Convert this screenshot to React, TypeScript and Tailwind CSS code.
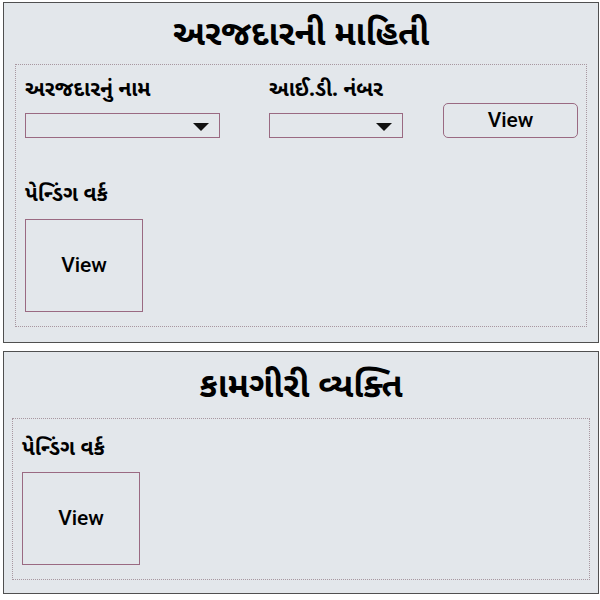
import React from 'react'

const guj = { fontFamily: '"Noto Sans Gujarati", "Lohit Gujarati", "Noto Sans", "DejaVu Sans", sans-serif' }

function Caret() {
  return (
    <svg width="16" height="8" viewBox="0 0 16 8" className="shrink-0">
      <polygon points="0,0 16,0 8,8" fill="#111" />
    </svg>
  )
}

function Select({ width }: { width: string }) {
  return (
    <div className={`${width} h-[25px] border border-[#9a6a82] flex items-center justify-end pr-[10px] pt-[2px]`}>
      <Caret />
    </div>
  )
}

function PendingView() {
  return (
    <div className="w-[118px] h-[93px] border border-[#9a6a82] flex items-center justify-center text-[21px] font-medium text-black font-['Roboto',Arial,sans-serif]">
      View
    </div>
  )
}

export default function App() {
  return (
    <div className="w-[600px] h-[600px] bg-white pt-[2px] pl-[3px]">
      {/* Applicant info */}
      <section className="w-[596px] h-[341px] border border-[#505050] bg-[#e3e7eb] px-[11px] flex flex-col">
        <h1 style={guj} className="h-[61px] pt-[8px] flex items-center justify-center text-[34px] font-bold text-black">
          અરજદારની માહિતી
        </h1>
        <div className="h-[263px] border border-dotted border-[#a897a0] pl-[9px] pt-[12px]">
          <div className="flex items-end">
            <div className="w-[244px]">
              <div style={guj} className="text-[21px] font-bold text-black leading-[28px] mb-[8px]">અરજદારનું નામ</div>
              <Select width="w-[195px]" />
            </div>
            <div className="w-[174px]">
              <div style={guj} className="text-[21px] font-bold text-black leading-[28px] mb-[8px]">આઈ.ડી. નંબર</div>
              <Select width="w-[134px]" />
            </div>
            <button className="w-[135px] h-[35px] border border-[#9a6a82] rounded-[5px] text-[21px] font-medium text-black font-['Roboto',Arial,sans-serif]">
              View
            </button>
          </div>
          <div style={guj} className="mt-[44px] text-[21px] font-bold text-black leading-[28px] mb-[9px]">પેન્ડિંગ વર્ક</div>
          <PendingView />
        </div>
      </section>

      {/* Worker */}
      <section className="mt-[8px] w-[596px] h-[243px] border border-[#505050] bg-[#e3e7eb] px-[8px] flex flex-col">
        <h2 style={guj} className="h-[66px] pt-[8px] flex items-center justify-center text-[34px] font-bold text-black">
          કામગીરી વ્યક્તિ
        </h2>
        <div className="h-[162px] border border-dotted border-[#a897a0] pl-[9px] pt-[17px]">
          <div style={guj} className="text-[21px] font-bold text-black leading-[28px] mb-[8px]">પેન્ડિંગ વર્ક</div>
          <PendingView />
        </div>
      </section>
    </div>
  )
}
